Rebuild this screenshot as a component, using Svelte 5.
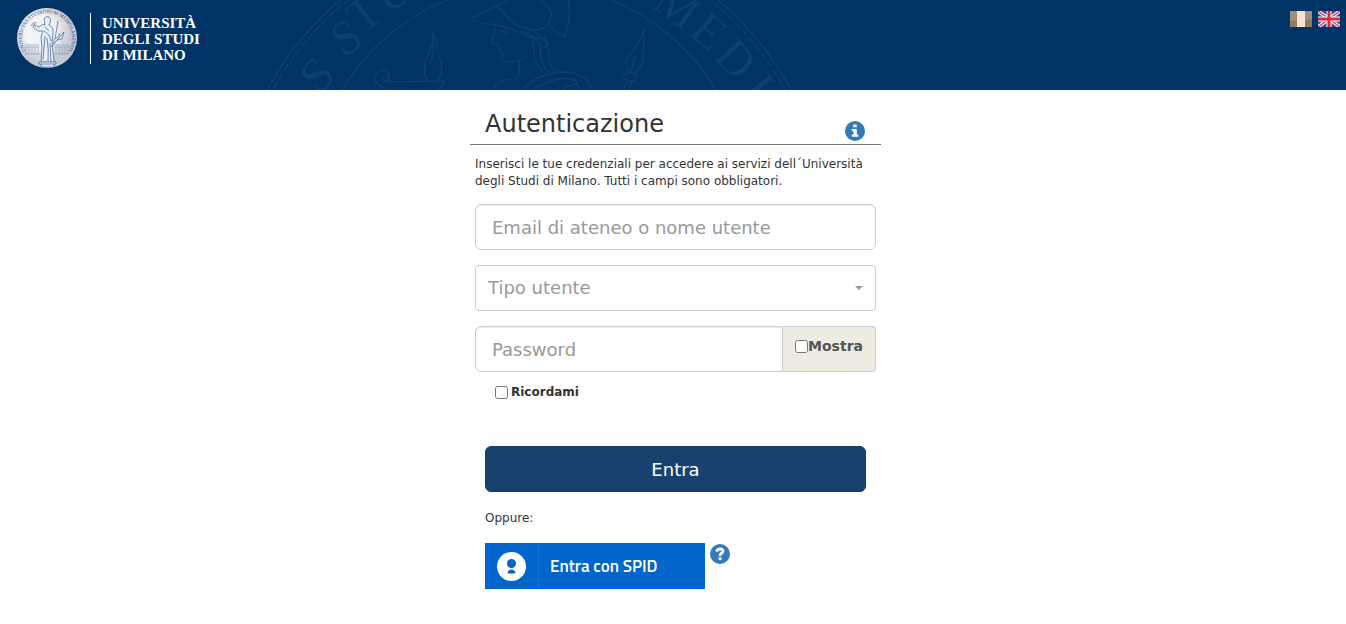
<script lang="ts">
	let username = '';
	let userType = '';
	let password = '';
	let showPassword = false;
	let remember = false;

	const userTypes = ['Studente', 'Personale', 'Altro'];

	// Letters running round the big seal behind the header
	const sealLetters = [
		{ char: 'S', x: 317, y: 75, angle: -44 },
		{ char: 'S', x: 346, y: 37, angle: -32 },
		{ char: 'T', x: 364, y: 13, angle: -38 },
		{ char: 'U', x: 393, y: -8, angle: -28 },
		{ char: 'M', x: 677, y: 6, angle: 36 },
		{ char: 'E', x: 709, y: 31, angle: 41 },
		{ char: 'D', x: 736, y: 59, angle: 47 },
		{ char: 'I', x: 759, y: 86, angle: 54 }
	];
</script>

<header class="header">
	<svg class="watermark" width="800" height="90" viewBox="0 0 800 90" aria-hidden="true">
		<g class="lines">
			<circle cx="529" cy="228" r="296" />
			<circle cx="529" cy="228" r="291" stroke-dasharray="7 3" />
			<circle cx="529" cy="202" r="218" />
			<!-- oil lamp -->
			<path d="M394 90 C386 90 373 85 375 76 C379 68 390 69 389 77 C387 83 381 81 383 76 M386 82 L444 81 Q443 86 438 90 M427 80 C421 69 426 62 429 52 C432 46 434 39 432 33 C438 37 435 46 439 56 C443 65 442 74 438 80 M430 64 Q435 48 433 42" />
			<!-- helmeted head -->
			<path d="M471 18 L509 0 M471 18 Q480 24 491 24 C506 26 518 31 532 38 M496 7 C505 9 505 21 521 27 C536 33 547 30 550 20 C554 11 547 5 541 0 M568 0 C571 13 568 27 565 37 C560 35 555 30 550 27 M495 25 C497 34 490 38 493 44 L499 45 L500 50 L503 54 L501 57 C505 65 509 63 517 60 Q521 60 519 75 C516 82 499 76 494 88 M519 60 Q524 60 526 56 M500 31 Q505 30 509 33 L502 34" />
			<path d="M520 27 Q533 28 545 41 M520 31 Q532 32 540 46 M524 36 Q536 38 543 39 M532 38 C535 49 531 61 543 72 M541 42 C539 57 541 65 549 73 M545 35 C547 47 551 53 549 62 Q551 69 561 73 M541 48 L546 47 M521 90 C531 82 539 75 551 74 C566 70 582 72 589 83 L592 90 M531 90 C550 80 562 76 574 80 Q578 82 579 90 M563 90 Q568 85 577 84" />
			<!-- spear -->
			<path d="M644 30 C642 39 633 51 626 60 Q626 67 630 73 L635 73 Q641 67 643 60 Z M635 55 L631 72 M626 74 Q630 71 637 75 Q638 80 632 81 Q625 81 623 77 Z M627 81 L624 90 M632 81 L629 90" />
		</g>
		{#each sealLetters as letter}
			<text transform="translate({letter.x} {letter.y}) rotate({letter.angle})" dy="16">
				{letter.char}
			</text>
		{/each}
	</svg>

	<a class="brand" href="#home">
		<svg class="seal" width="62" height="62" viewBox="0 0 62 62" aria-hidden="true">
			<defs>
				<radialGradient id="disc" cx="40%" cy="40%">
					<stop offset="0.5" stop-color="#f4f3f4" />
					<stop offset="1" stop-color="#c5c8d0" />
				</radialGradient>
				<path id="ring" d="M15 50.2 A25 25 0 1 1 47 50.2" />
			</defs>
			<circle cx="31" cy="31" r="30" fill="url(#disc)" />
			<text class="motto">
				<textPath href="#ring" startOffset="50%">UNIVERSITAS STUDIORUM MEDIOLANENSIS</textPath>
			</text>
			<g fill="none" stroke="#8a9dc2" stroke-width="0.7">
				<path d="M9 38 H23 M38 38 H53 M8 40 H23 M39 40 H54 M9 47 H24 M38 47 H53 M10 40 V47 M13 40 V47 M16 40 V47 M19 40 V47 M22 40 V47 M40 40 V47 M43 40 V47 M46 40 V47 M49 40 V47 M52 40 V47" />
			</g>
			<g fill="#e9edf4" stroke="#4f6ea6" stroke-width="0.8" stroke-linejoin="round">
				<path d="M28 12 Q30 8 33 10 Q36 12 34 16 L33 18 Q38 20 37 27 L36 34 L38 55 H25 L26 40 L25 30 L27 24 L22 24 L17 20 L18 18 L23 20 Q27 16 29 18 Z" />
				<path d="M28 24 Q34 27 35 34 M29 29 L27 53 M31 31 Q33 42 32 54 M34 36 L35 54 M29 20 L33 24" fill="none" />
				<path d="M42 14 L39 32 M35 40 L48 25 M38 37 L38 32 L42 30 M41 33 L46 32 L48 25 M43 30 L43 26 M15 19 L18 15 M18 18 L20 15" fill="none" />
				<path d="M23 55 H40 V57 H23 Z M25 57 V60 H38 V57" />
			</g>
		</svg>
		<span class="brand-name">UNIVERSITÀ<br />DEGLI STUDI<br />DI MILANO</span>
	</a>

	<nav class="languages" aria-label="Lingua">
		<a href="#it" aria-label="Italiano">
			<svg width="22" height="16" viewBox="0 0 22 16">
				<path fill="#927960" d="M0 0h22v16H0z" />
				<path fill="#a58d74" d="M0 0h22v8Q11 10 0 10z" />
				<path fill="#f4e5d7" d="M7 0h8v16H7z" />
			</svg>
		</a>
		<a href="#en" aria-label="English">
			<svg width="22" height="16" viewBox="0 0 22 16">
				<path fill="#314f91" d="M0 0h22v16H0z" />
				<path stroke="#f4f0f5" stroke-width="3.6" d="M0 0 L22 16 M22 0 L0 16" />
				<path stroke="#d5394d" stroke-width="1.3" d="M0 0 L22 16 M22 0 L0 16" />
				<path fill="#fff" d="M8.5 0h5v16h-5z M0 5.5h22v5H0z" />
				<path fill="#d92b40" d="M9.5 0h3v16h-3z M0 6.5h22v3H0z" />
			</svg>
		</a>
	</nav>
</header>

<main class="login">
	<div class="title">
		<h1>Autenticazione</h1>
		<a class="help" href="#info" aria-label="Informazioni">
			<svg width="20" height="20" viewBox="0 0 20 20">
				<circle cx="10" cy="10" r="10" fill="#337ab7" />
				<path fill="#fff" d="M8.2 3.5h3.5v2.8H8.2z M6.8 8h5v5.6h1.5v2.2H6.8v-2.2h1.7v-3.4H6.8z" />
			</svg>
		</a>
	</div>

	<form on:submit|preventDefault>
		<p class="intro">
			Inserisci le tue credenziali per accedere ai servizi dell´Università degli Studi di Milano.
			Tutti i campi sono obbligatori.
		</p>

		<input
			class="field"
			type="text"
			aria-label="Email di ateneo o nome utente"
			placeholder="Email di ateneo o nome utente"
			bind:value={username}
		/>

		<div class="select-wrap">
			<select class="field" aria-label="Tipo utente" bind:value={userType}>
				<option value="">Tipo utente</option>
				{#each userTypes as type}
					<option value={type}>{type}</option>
				{/each}
			</select>
			<span class="caret"></span>
		</div>

		<div class="password">
			<input
				class="field"
				type={showPassword ? 'text' : 'password'}
				aria-label="Password"
				placeholder="Password"
				value={password}
				on:input={(e) => (password = e.currentTarget.value)}
			/>
			<label class="show">
				<input type="checkbox" bind:checked={showPassword} />
				<span>Mostra</span>
			</label>
		</div>

		<label class="remember">
			<input type="checkbox" bind:checked={remember} />
			<span>Ricordami</span>
		</label>

		<div class="actions">
			<button class="submit" type="submit">Entra</button>
			<p>Oppure:</p>
			<div class="spid-row">
				<a class="spid" href="#spid">
					<span class="spid-icon">
						<svg width="29" height="29" viewBox="0 0 29 29" aria-hidden="true">
							<circle cx="14.5" cy="14.5" r="14.5" fill="#fff" />
							<circle cx="14.5" cy="11.5" r="4.5" fill="#06c" />
							<path fill="#06c" d="M10.5 21.5 Q11 17.5 14.5 17.5 Q18 17.5 18.5 21.5 Z" />
						</svg>
					</span>
					<span class="spid-text">Entra con SPID</span>
				</a>
				<a class="help" href="#spid-info" aria-label="Informazioni su SPID">
					<svg width="20" height="20" viewBox="0 0 20 20">
						<circle cx="10" cy="10" r="10" fill="#337ab7" />
						<path fill="none" stroke="#fff" stroke-width="2.8" d="M6.8 7.6 Q7.2 4.9 10 4.9 Q13 5 13 7.3 Q13 8.7 11.2 9.6 Q10 10.2 10 12" />
						<path fill="#fff" d="M8.6 13.3h2.9v2.8H8.6z" />
					</svg>
				</a>
			</div>
		</div>
	</form>
</main>

<style>
	:global(body) {
		margin: 0;
		background: #fff;
		color: #333;
		font-family: Verdana, 'DejaVu Sans', sans-serif;
		font-size: 12px;
		line-height: 17px;
	}

	* {
		box-sizing: border-box;
	}

	.header {
		position: relative;
		display: flex;
		justify-content: space-between;
		align-items: flex-start;
		height: 90px;
		padding: 7px 6px 0 16px;
		overflow: hidden;
		background: #036;
	}

	/* Seal drawing sits behind the header content */
	.watermark {
		position: absolute;
		top: 0;
		left: 0;
	}

	.watermark .lines {
		fill: none;
		stroke: #0d3f70;
		stroke-width: 1.5;
	}

	.watermark text {
		fill: #0d3f70;
		font-family: 'Liberation Serif', serif;
		font-size: 48px;
		text-anchor: middle;
	}

	.brand {
		position: relative;
		display: flex;
		align-items: center;
		gap: 12px;
		color: #fff;
		text-decoration: none;
	}

	.motto {
		fill: #2f4f8c;
		font-family: 'Liberation Serif', serif;
		font-size: 5px;
		text-anchor: middle;
	}

	.brand-name {
		padding: 2px 0 1px 11px;
		border-left: 1px solid #fff;
		font-family: 'Liberation Serif', serif;
		font-size: 15px;
		font-weight: bold;
		line-height: 16px;
	}

	.languages {
		position: relative;
		display: flex;
		gap: 6px;
		padding-top: 4px;
	}

	svg {
		display: block;
	}

	.login {
		width: 416px;
		max-width: 100%;
		margin: 0 auto;
		padding: 19px 0 32px 5px;
	}

	.title {
		display: flex;
		justify-content: space-between;
		align-items: flex-end;
		padding: 0 16px 3px 15px;
		border-bottom: 1px solid #777;
	}

	h1 {
		margin: 0;
		padding-bottom: 1px;
		font-size: 24px;
		font-weight: normal;
		line-height: 31px;
	}

	form {
		padding: 0 5px;
	}

	.intro {
		margin: 11px 0 14px;
	}

	.field {
		display: block;
		width: 100%;
		height: 46px;
		margin: 0;
		padding: 10px 16px;
		border: 1px solid #ccc;
		border-radius: 6px;
		background: #fff;
		box-shadow: inset 0 1px 1px rgba(0, 0, 0, 0.08);
		color: #333;
		font-family: inherit;
		font-size: 18px;
		line-height: 24px;
	}

	.field::placeholder {
		color: #999;
		opacity: 1;
	}

	.select-wrap {
		position: relative;
		margin: 15px 0;
	}

	select.field {
		padding: 10px 12px;
		border-radius: 4px;
		box-shadow: none;
		color: #999;
		appearance: none;
	}

	.caret {
		position: absolute;
		top: 21px;
		right: 13px;
		border-top: 4px solid #999;
		border-right: 4px solid transparent;
		border-left: 4px solid transparent;
		pointer-events: none;
	}

	.password {
		display: flex;
	}

	.password .field {
		flex: 1;
		min-width: 0;
		border-radius: 6px 0 0 6px;
	}

	.show {
		display: flex;
		align-items: center;
		padding: 0 12px 5px;
		border: 1px solid #ccc;
		border-left: 0;
		border-radius: 0 4px 4px 0;
		background: #eeebe2;
		color: #555;
		font-size: 14px;
		font-weight: bold;
	}

	input[type='checkbox'] {
		width: 13px;
		height: 13px;
		margin: 0;
	}

	.remember {
		display: flex;
		align-items: center;
		gap: 3px;
		margin: 12px 0 0 20px;
		font-weight: bold;
	}

	.actions {
		padding: 45px 10px 0;
	}

	.submit {
		display: block;
		width: 100%;
		height: 46px;
		border: 1px solid #143c66;
		border-radius: 6px;
		background: #174270;
		color: #fff;
		font-family: inherit;
		font-size: 18px;
		cursor: pointer;
	}

	.actions p {
		margin: 18px 0 16px;
	}

	.spid-row {
		display: flex;
		align-items: flex-start;
		gap: 5px;
	}

	.spid {
		display: flex;
		width: 220px;
		height: 46px;
		background: #06c;
		color: #fff;
		font-family: 'Titillium Web', Roboto, sans-serif;
		font-size: 17px;
		font-weight: 600;
		text-decoration: none;
	}

	.spid-icon {
		display: flex;
		align-items: center;
		padding: 0 12px;
		border-right: 1px solid #1a75d1;
	}

	.spid-text {
		align-self: center;
		padding-left: 11px;
	}

	.spid-row .help {
		padding-top: 1px;
	}
</style>
